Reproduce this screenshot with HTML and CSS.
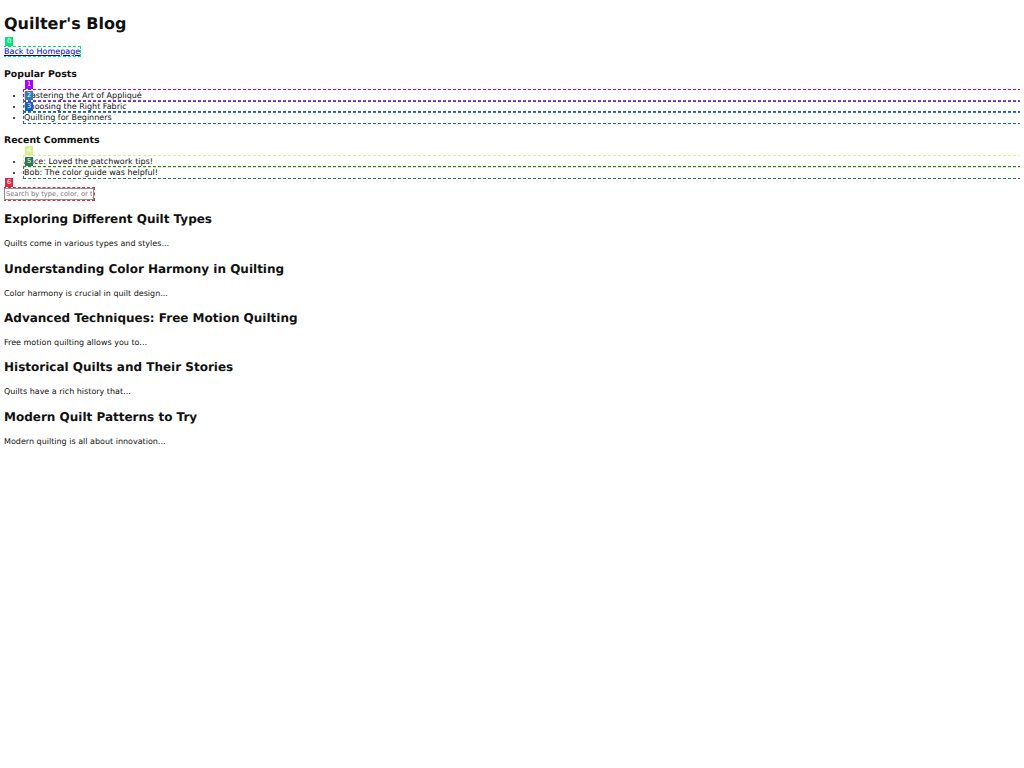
FILE: index.html
```html
<!DOCTYPE html>
<html lang="en">
<head>
<meta charset="utf-8">
<title>Quilter's Blog</title>
<link rel="stylesheet" href="styles.css">
</head>
<body>
<h1>Quilter's Blog</h1>
<div class="nav">
  <a href="#" class="mark m0">Back to Homepage<span class="badge">0</span></a>
</div>
<h3>Popular Posts</h3>
<ul>
  <li class="mark m1"><span class="badge">1</span>Mastering the Art of Appliqué</li>
  <li class="mark m2"><span class="badge">2</span>Choosing the Right Fabric</li>
  <li class="mark m3"><span class="badge">3</span>Quilting for Beginners</li>
</ul>
<h3>Recent Comments</h3>
<ul>
  <li class="mark m4"><span class="badge">4</span>Alice: Loved the patchwork tips!</li>
  <li class="mark m5"><span class="badge">5</span>Bob: The color guide was helpful!</li>
</ul>
<div class="search">
  <span class="mark m6 field-wrap"><input type="text" placeholder="Search by type, color, or theme..."><span class="badge">6</span></span>
</div>
<div class="post">
  <h2>Exploring Different Quilt Types</h2>
  <p>Quilts come in various types and styles...</p>
</div>
<div class="post">
  <h2>Understanding Color Harmony in Quilting</h2>
  <p>Color harmony is crucial in quilt design...</p>
</div>
<div class="post">
  <h2>Advanced Techniques: Free Motion Quilting</h2>
  <p>Free motion quilting allows you to...</p>
</div>
<div class="post">
  <h2>Historical Quilts and Their Stories</h2>
  <p>Quilts have a rich history that...</p>
</div>
<div class="post">
  <h2>Modern Quilt Patterns to Try</h2>
  <p>Modern quilting is all about innovation...</p>
</div>
</body>
</html>
```

FILE: styles.css
```css
html, body {
  background: #ffffff;
}
body {
  margin: 4px;
  font-family: "DejaVu Sans", sans-serif;
  font-size: 8px;
  line-height: 11px;
  color: #111111;
  text-rendering: geometricPrecision;
}
h1 {
  font-size: 16px;
  line-height: 23px;
  margin: 7.7px 0 11px;
}
.nav {
  height: 11px;
}
a {
  color: #0000ee;
}
h3 {
  font-size: 9.36px;
  line-height: 13px;
  margin: 11px 0 9.4px;
}
ul {
  margin: 0;
  padding-left: 20px;
}
li {
  height: 11px;
}
.search {
  margin-top: 10px;
  height: 11.5px;
}
.field-wrap {
  display: inline-block;
  vertical-align: top;
}
input {
  display: block;
  box-sizing: border-box;
  width: 90px;
  height: 11.5px;
  margin: 0;
  padding: 0 1px;
  border: 1px solid #8f8f8f;
  font-family: "DejaVu Sans", sans-serif;
  font-size: 6.67px;
  color: #000;
  background: #fff;
}
input::placeholder {
  color: #757575;
}
h2 {
  font-size: 12px;
  line-height: 16px;
  margin: 11.2px 0;
}
p {
  margin: 11.2px 0;
}

/* annotation overlays */
.mark {
  position: relative;
  outline-width: 1px;
  outline-style: dashed;
}
.badge {
  position: absolute;
  left: 1px;
  bottom: calc(100% + 1px);
  height: 9px;
  min-width: 4px;
  padding: 0 2px;
  color: #ffffff;
  font-family: "DejaVu Sans", sans-serif;
  font-size: 6.5px;
  font-weight: normal;
  line-height: 9px;
  text-align: center;
  text-decoration: none;
}
.m0 { outline-color: #00e676; }
.m0 .badge { background: #00e676; }
.m1 { outline-color: #aa00ff; }
.m1 .badge { background: #aa00ff; }
.m2 { outline-color: #2f7db5; }
.m2 .badge { background: #2f7db5; }
.m3 { outline-color: #1560c8; }
.m3 .badge { background: #1560c8; }
.m4 { outline-color: #d6f28c; }
.m4 .badge { background: #d6f28c; }
.m5 { outline-color: #2b7a52; }
.m5 .badge { background: #2b7a52; }
.m6 { outline-color: #dc2a40; }
.m6 .badge { background: #dc2a40; }
```
